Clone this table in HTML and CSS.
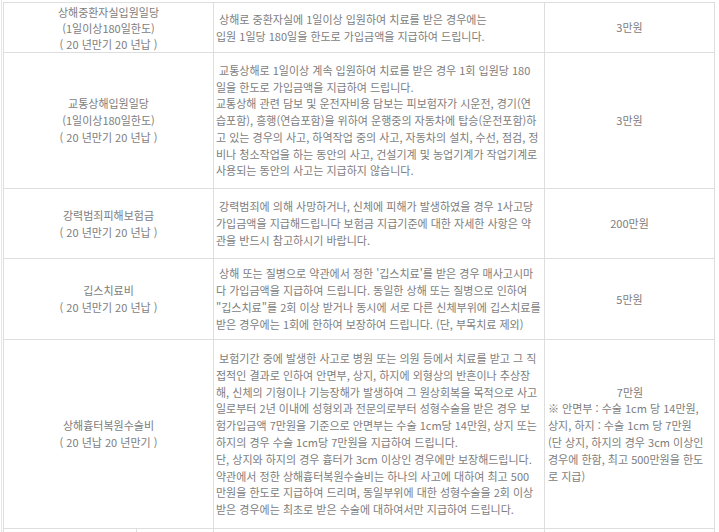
FILE: index.html
```html
<!DOCTYPE html>
<html lang="ko">
<head>
<meta charset="utf-8">
<link rel="stylesheet" href="styles.css">
</head>
<body>
<div class="wrap">
<table class="tbl">
<colgroup><col class="c1"><col class="c2"><col class="c3"></colgroup>
<tr class="r1">
<td class="name tight"><span class="ln">상해중환자실입원일당</span><span class="ln">(1일이상180일한도)</span><span class="ln">( 20 년만기 20 년납 )</span></td>
<td class="desc"><span class="ln">&nbsp;상해로 중환자실에 1일이상 입원하여 치료를 받은 경우에는</span><span class="ln">입원 1일당 180일을 한도로 가입금액을 지급하여 드립니다.</span></td>
<td class="amt">3만원</td>
</tr>
<tr class="r2">
<td class="name"><span class="ln">교통상해입원일당</span><span class="ln">(1일이상180일한도)</span><span class="ln">( 20 년만기 20 년납 )</span></td>
<td class="desc"><span class="ln">&nbsp;교통상해로 1일이상 계속 입원하여 치료를 받은 경우 1회 입원당 180</span><span class="ln">일을 한도로 가입금액을 지급하여 드립니다.</span><span class="ln">교통상해 관련 담보 및 운전자비용 담보는 피보험자가 시운전, 경기(연</span><span class="ln">습포함), 흥행(연습포함)을 위하여 운행중의 자동차에 탑승(운전포함)하</span><span class="ln">고 있는 경우의 사고, 하역작업 중의 사고, 자동차의 설치, 수선, 점검, 정</span><span class="ln">비나 청소작업을 하는 동안의 사고, 건설기계 및 농업기계가 작업기계로</span><span class="ln">사용되는 동안의 사고는 지급하지 않습니다.</span></td>
<td class="amt">3만원</td>
</tr>
<tr class="r3">
<td class="name"><span class="ln">강력범죄피해보험금</span><span class="ln">( 20 년만기 20 년납 )</span></td>
<td class="desc"><span class="ln">&nbsp;강력범죄에 의해 사망하거나, 신체에 피해가 발생하였을 경우 1사고당</span><span class="ln">가입금액을 지급해드립니다 보험금 지급기준에 대한 자세한 사항은 약</span><span class="ln">관을 반드시 참고하시기 바랍니다.</span></td>
<td class="amt">200만원</td>
</tr>
<tr class="r4">
<td class="name"><span class="ln">깁스치료비</span><span class="ln">( 20 년만기 20 년납 )</span></td>
<td class="desc"><span class="ln">&nbsp;상해 또는 질병으로 약관에서 정한 '깁스치료'를 받은 경우 매사고시마</span><span class="ln">다 가입금액을 지급하여 드립니다. 동일한 상해 또는 질병으로 인하여</span><span class="ln">"깁스치료"를 2회 이상 받거나 동시에 서로 다른 신체부위에 깁스치료를</span><span class="ln">받은 경우에는 1회에 한하여 보장하여 드립니다. (단, 부목치료 제외)</span></td>
<td class="amt">5만원</td>
</tr>
<tr class="r5">
<td class="name"><span class="ln">상해흉터복원수술비</span><span class="ln">( 20 년납 20 년만기 )</span></td>
<td class="desc"><span class="ln">&nbsp;보험기간 중에 발생한 사고로 병원 또는 의원 등에서 치료를 받고 그 직</span><span class="ln">접적인 결과로 인하여 안면부, 상지, 하지에 외형상의 반흔이나 추상장</span><span class="ln">해, 신체의 기형이나 기능장해가 발생하여 그 원상회복을 목적으로 사고</span><span class="ln">일로부터 2년 이내에 성형외과 전문의로부터 성형수술을 받은 경우 보</span><span class="ln">험가입금액 7만원을 기준으로 안면부는 수술 1cm당 14만원, 상지 또는</span><span class="ln">하지의 경우 수술 1cm당 7만원을 지급하여 드립니다.</span><span class="ln">단, 상지와 하지의 경우 흉터가 3cm 이상인 경우에만 보장해드립니다.</span><span class="ln">약관에서 정한 상해흉터복원수술비는 하나의 사고에 대하여 최고 500</span><span class="ln">만원을 한도로 지급하여 드리며, 동일부위에 대한 성형수술을 2회 이상</span><span class="ln">받은 경우에는 최초로 받은 수술에 대하여서만 지급하여 드립니다.</span></td>
<td class="amt note"><span class="ln center">7만원</span><span class="ln">※ 안면부 : 수술 1cm 당 14만원,</span><span class="ln">상지, 하지 : 수술 1cm 당 7만원</span><span class="ln">(단 상지, 하지의 경우 3cm 이상인</span><span class="ln">경우에 한함, 최고 500만원을 한도</span><span class="ln">로 지급)</span></td>
</tr>
<tr class="r6">
<td class="name split"><div class="half"></div></td>
<td class="desc"></td>
<td class="amt"></td>
</tr>
</table>
</div>
</body>
</html>
```

FILE: styles.css
```css
html, body {
  margin: 0;
  padding: 0;
  background: #fff;
}
body {
  font-family: "Noto Sans CJK KR", "Noto Sans", sans-serif;
  font-size: 11px;
  color: #7d7d7d;
}
.wrap {
  margin-left: 1px;
  border-left: 1px solid #e6e6e6;
  padding-left: 1px;
  padding-top: 2px;
  height: 530px;
  overflow: hidden;
}
.tbl {
  border-collapse: collapse;
  table-layout: fixed;
  width: 711px;
}
.c1 { width: 210px; }
.c2 { width: 331px; }
.c3 { width: 170px; }
.tbl td {
  border: 1px solid #dedede;
  vertical-align: middle;
  line-height: 16.8px;
  padding: 0 2px;
  overflow: hidden;
}
.ln {
  display: block;
  white-space: nowrap;
}
.name, .amt {
  text-align: center;
}
.tight {
  line-height: 16px !important;
}
.r1 { height: 50px; }
.r2 { height: 136px; }
.r3 { height: 70px; }
.r4 { height: 81px; }
.r5 { height: 189px; }
.r6 { height: 20px; }
.note {
  text-align: left;
  padding-left: 3px !important;
}
.note .center {
  text-align: center;
}
.split {
  padding: 0 !important;
}
.half {
  width: 132px;
  height: 20px;
  border-right: 1px solid #dedede;
}
```
